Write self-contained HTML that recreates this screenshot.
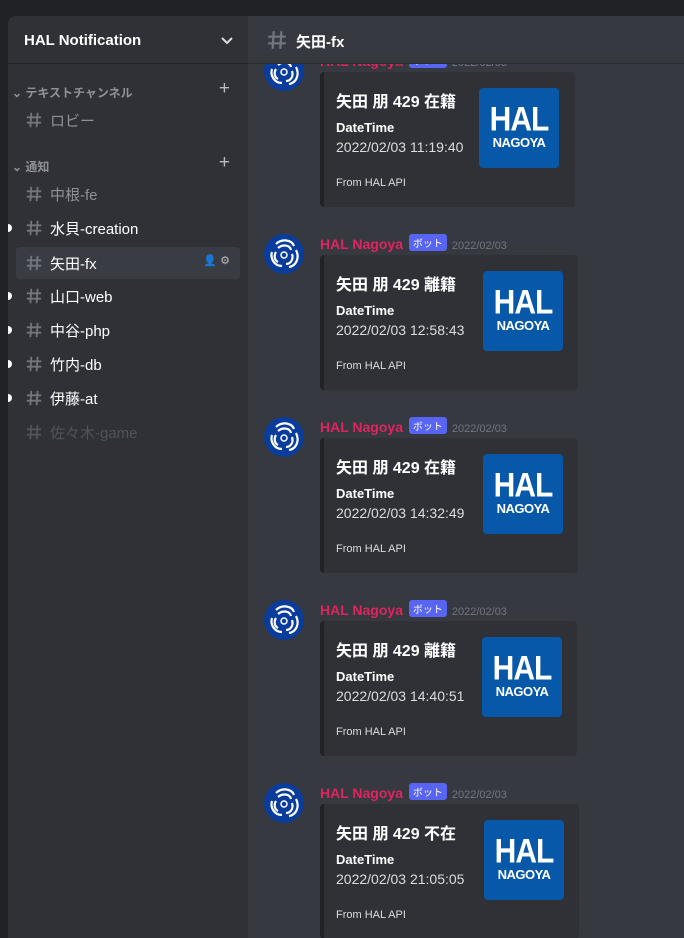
<!DOCTYPE html>
<html><head><meta charset="utf-8"><style>
*{margin:0;padding:0;box-sizing:border-box}
body{width:684px;height:938px;background:#202225;font-family:"Liberation Sans","Noto Sans CJK JP",sans-serif;position:relative;overflow:hidden}
.side{position:absolute;left:8px;top:16px;width:240px;height:922px;background:#2f3136;border-top-left-radius:8px}
.sh{height:48px;border-bottom:1px solid #202225;color:#fff;font-weight:bold;font-size:15px;padding:16px 0 0 16px;position:relative}
.sh svg{position:absolute;right:12px;top:15px}
.cat{position:absolute;left:4px;width:232px;color:#8e9297;font-size:12px;font-weight:bold}
.plus{position:absolute;right:14px;top:-6px;color:#b9bbbe;font-size:19px;font-weight:normal}
.ch{position:absolute;left:8px;width:224px;height:32px;border-radius:4px;font-size:15px;padding:6px 0 0 34px;color:#8e9297}
.ch svg{position:absolute;left:9px;top:7px}
.ch.u{color:#fff}
.ch.sel{background:#393c43;color:#fff}
.ch.mut{color:#4f545c}
.dot{position:absolute;left:0;width:4px;height:8px;background:#fff;border-radius:0 4px 4px 0}
.main{position:absolute;left:248px;top:16px;width:436px;height:922px;background:#36393f;overflow:hidden}
.mh{position:absolute;left:0;top:0;width:436px;height:48px;background:#36393f;border-bottom:1px solid #2a2c31;z-index:2;color:#fff;font-weight:bold;font-size:15px;padding:15px 0 0 48px}
.mh svg{position:absolute;left:18px;top:13px}
.msg{position:absolute;left:0;width:436px;height:160px}
.av{position:absolute;left:16px;top:0;width:40px;height:40px;border-radius:50%;background:#0a3c9b;overflow:hidden}
.nm{position:absolute;left:72px;top:0;color:#e0245e;font-size:14px;font-weight:bold;white-space:nowrap}
.bot{display:inline-block;background:#5865f2;color:#fff;font-size:10px;padding:1px 4px;border-radius:3px;vertical-align:2px;margin-left:2px;font-weight:normal}
.ts{color:#72767d;font-size:11px;font-weight:normal;margin-left:5px}
.em{position:absolute;left:72px;top:21px;height:135px;background:#2f3136;border-left:4px solid #202225;border-radius:4px}
.em .t{position:absolute;left:12px;top:16px;color:#fff;font-weight:bold;font-size:16px}
.em .k{position:absolute;left:12px;top:48px;color:#fff;font-weight:bold;font-size:13px}
.em .v{position:absolute;left:12px;top:67px;color:#dcddde;font-size:14px}
.em .f{position:absolute;left:12px;top:105px;color:#dcddde;font-size:11px}
.img{position:absolute;top:16px;width:80px;height:80px;background:#0758a8;border-radius:4px;color:#fff;text-align:center;font-weight:bold}
.img b{display:block;font-size:30px;line-height:30px;margin-top:17px;letter-spacing:-1px;transform:scaleY(1.15)}
.img i{display:block;font-style:normal;font-size:13px;line-height:16px;letter-spacing:-0.5px}
</style></head><body>
<svg width="0" height="0" style="position:absolute"><defs><symbol id="hs" viewBox="0 0 20 20"><path d="M7 2L6 18M14 2L13 18M2 7H18M2 13H18" stroke="currentColor" stroke-width="2" fill="none"/></symbol>
<symbol id="lg" viewBox="0 0 40 40"><g fill="none" stroke="#fff" stroke-width="2.2"><path d="M12 10C18 4 28 6 30 12"/><path d="M14 14C19 10 26 11 27 16"/><path d="M32 16C36 24 32 32 25 33"/><path d="M28 20C30 26 26 30 22 30"/><path d="M18 32C10 32 6 24 8 18"/><path d="M14 28C10 26 10 21 12 18"/></g><circle cx="20" cy="21" r="3" fill="#0a3c9b" stroke="#fff" stroke-width="1.5"/></symbol></defs></svg>
<div class="side">
 <div class="sh">HAL Notification<svg width="18" height="18" viewBox="0 0 18 18"><path d="M4 7l5 5 5-5" stroke="#dcddde" stroke-width="2" fill="none"/></svg></div>
 <div class="cat" style="top:68px">⌄ テキストチャンネル<span class="plus">+</span></div>
 <div class="ch" style="top:88px"><svg width="18" height="18" style="color:#72767d"><use href="#hs"/></svg>ロビー</div>
 <div class="cat" style="top:142px">⌄ 通知<span class="plus">+</span></div>
 <div class="ch" style="top:162px"><svg width="18" height="18" style="color:#72767d"><use href="#hs"/></svg>中根-fe</div>
 <div class="dot" style="top:208px"></div><div class="ch u" style="top:196px"><svg width="18" height="18" style="color:#72767d"><use href="#hs"/></svg>水貝-creation</div>
 <div class="ch sel" style="top:231px"><svg width="18" height="18" style="color:#72767d"><use href="#hs"/></svg>矢田-fx<span style="position:absolute;right:10px;top:7px;color:#b9bbbe;font-size:11px">👤 ⚙</span></div>
 <div class="dot" style="top:276px"></div><div class="ch u" style="top:264px"><svg width="18" height="18" style="color:#72767d"><use href="#hs"/></svg>山口-web</div>
 <div class="dot" style="top:310px"></div><div class="ch u" style="top:298px"><svg width="18" height="18" style="color:#72767d"><use href="#hs"/></svg>中谷-php</div>
 <div class="dot" style="top:344px"></div><div class="ch u" style="top:332px"><svg width="18" height="18" style="color:#72767d"><use href="#hs"/></svg>竹内-db</div>
 <div class="dot" style="top:378px"></div><div class="ch u" style="top:366px"><svg width="18" height="18" style="color:#72767d"><use href="#hs"/></svg>伊藤-at</div>
 <div class="ch mut" style="top:400px"><svg width="18" height="18" style="color:#4f545c"><use href="#hs"/></svg>佐々木-game</div>
</div>
<div class="main">
 <div class="mh"><svg width="22" height="22" style="color:#72767d"><use href="#hs"/></svg>矢田-fx</div>
 <div class="msg" style="top:35px"><div class="av"><svg width="40" height="40"><use href="#lg"/></svg></div><div class="nm">HAL Nagoya <span class="bot">ボット</span><span class="ts">2022/02/03</span></div>
  <div class="em" style="width:255px"><div class="t">矢田 朋 429 在籍</div><div class="k">DateTime</div><div class="v">2022/02/03 11:19:40</div><div class="f">From HAL API</div><div class="img" style="left:155px"><b>HAL</b><i>NAGOYA</i></div></div></div>
 <div class="msg" style="top:218px"><div class="av"><svg width="40" height="40"><use href="#lg"/></svg></div><div class="nm">HAL Nagoya <span class="bot">ボット</span><span class="ts">2022/02/03</span></div>
  <div class="em" style="width:258px"><div class="t">矢田 朋 429 離籍</div><div class="k">DateTime</div><div class="v">2022/02/03 12:58:43</div><div class="f">From HAL API</div><div class="img" style="left:159px"><b>HAL</b><i>NAGOYA</i></div></div></div>
 <div class="msg" style="top:401px"><div class="av"><svg width="40" height="40"><use href="#lg"/></svg></div><div class="nm">HAL Nagoya <span class="bot">ボット</span><span class="ts">2022/02/03</span></div>
  <div class="em" style="width:258px"><div class="t">矢田 朋 429 在籍</div><div class="k">DateTime</div><div class="v">2022/02/03 14:32:49</div><div class="f">From HAL API</div><div class="img" style="left:159px"><b>HAL</b><i>NAGOYA</i></div></div></div>
 <div class="msg" style="top:584px"><div class="av"><svg width="40" height="40"><use href="#lg"/></svg></div><div class="nm">HAL Nagoya <span class="bot">ボット</span><span class="ts">2022/02/03</span></div>
  <div class="em" style="width:257px"><div class="t">矢田 朋 429 離籍</div><div class="k">DateTime</div><div class="v">2022/02/03 14:40:51</div><div class="f">From HAL API</div><div class="img" style="left:158px"><b>HAL</b><i>NAGOYA</i></div></div></div>
 <div class="msg" style="top:767px"><div class="av"><svg width="40" height="40"><use href="#lg"/></svg></div><div class="nm">HAL Nagoya <span class="bot">ボット</span><span class="ts">2022/02/03</span></div>
  <div class="em" style="width:259px"><div class="t">矢田 朋 429 不在</div><div class="k">DateTime</div><div class="v">2022/02/03 21:05:05</div><div class="f">From HAL API</div><div class="img" style="left:160px"><b>HAL</b><i>NAGOYA</i></div></div></div>
</div>
</body></html>
